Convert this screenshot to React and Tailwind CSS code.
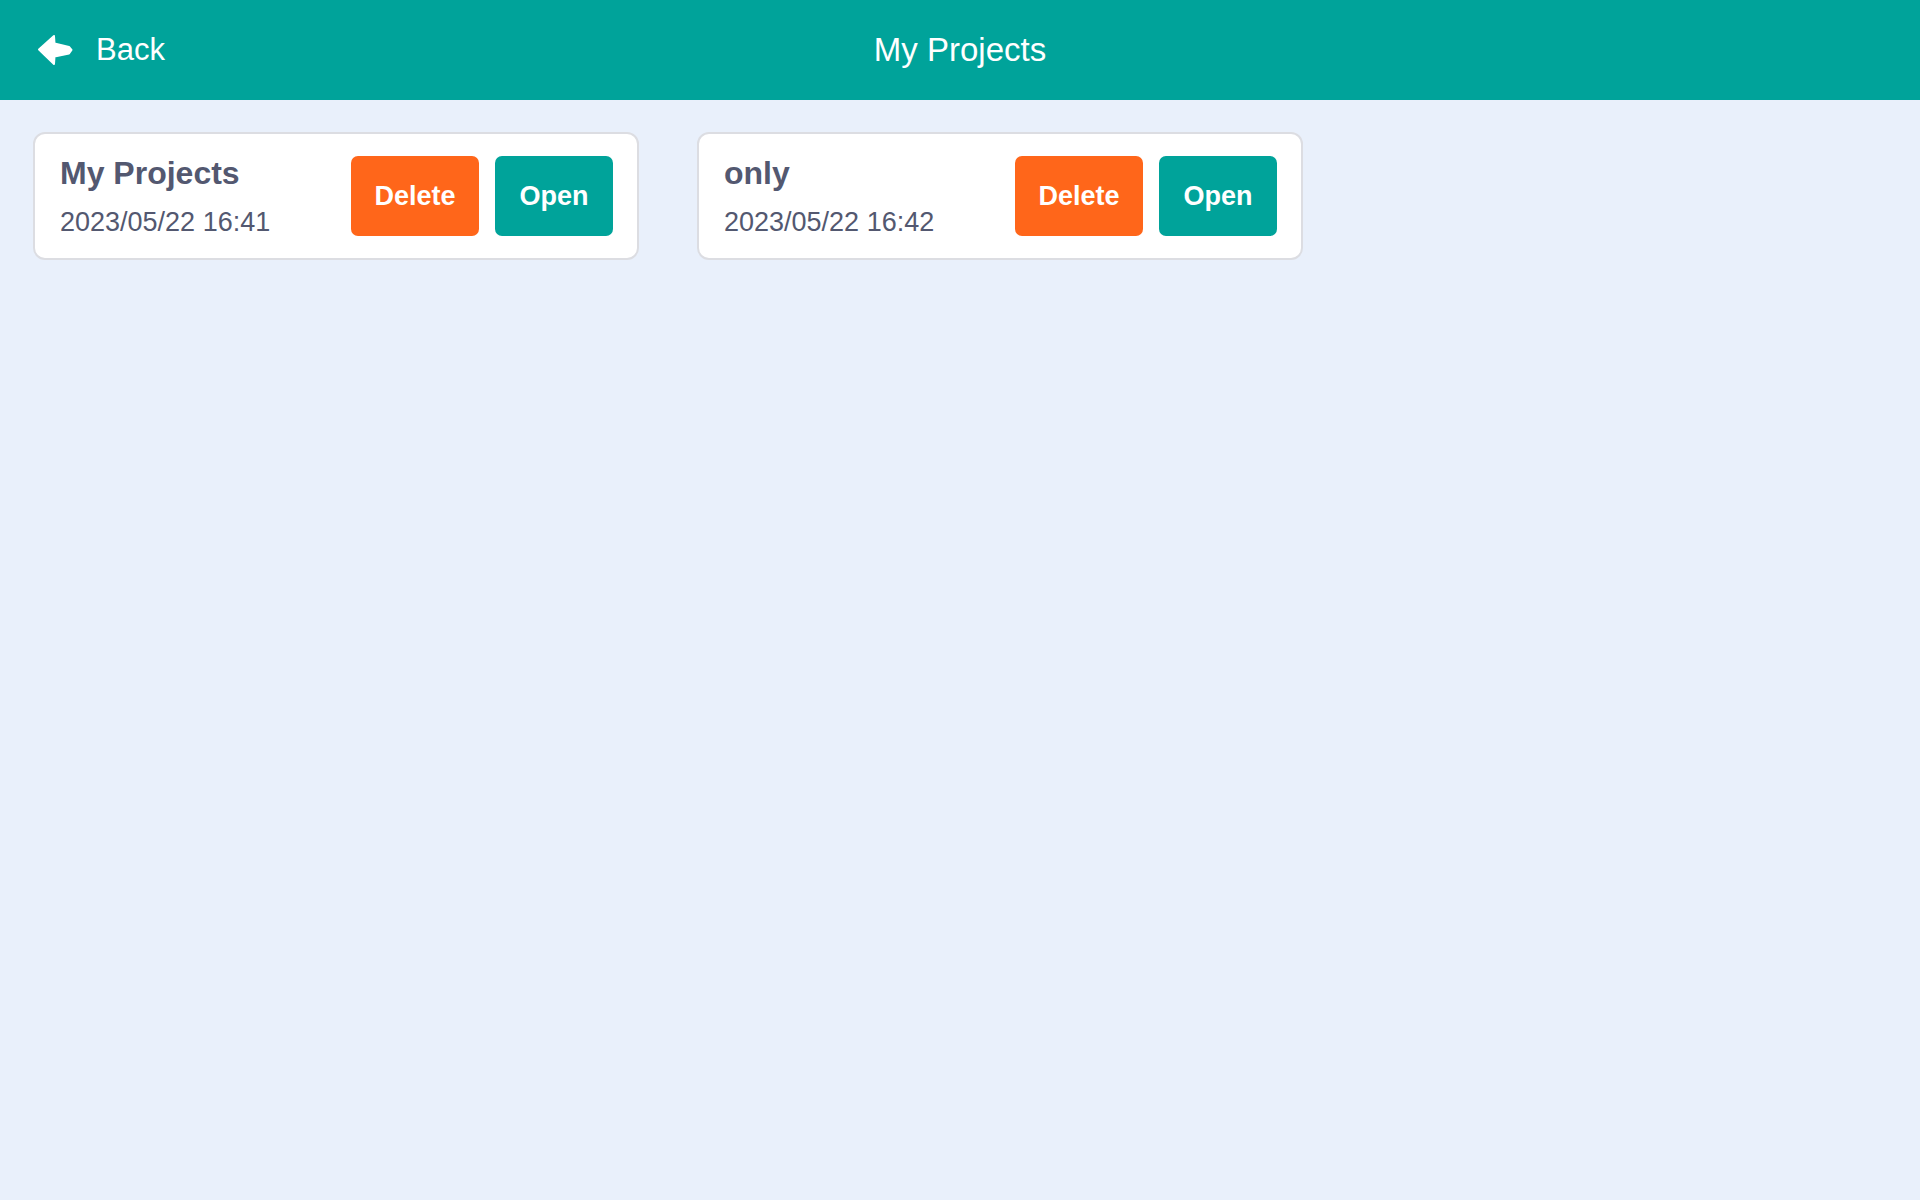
import React from "react";

const projects = [
  { name: "My Projects", date: "2023/05/22 16:41" },
  { name: "only", date: "2023/05/22 16:42" },
];

const BackArrow = () => (
  <svg width="36" height="32" viewBox="0 0 36 32" className="shrink-0">
    <polygon
      points="2,15.5 17,2 17.5,9.5 32,13 34.5,16 32,19.5 17.5,22.5 17,30"
      fill="#ffffff"
      stroke="#ffffff"
      strokeWidth="2"
      strokeLinejoin="round"
    />
  </svg>
);

const ProjectCard = ({ name, date }) => {
  return (
    <div className="w-[606px] h-[128px] bg-white border-2 border-[#dcdde2] rounded-xl pl-[25px] pr-[24px] py-[22px] flex items-center justify-between">
      <div className="flex flex-col justify-between h-full text-[#535870]">
        <div className="text-[32px] leading-[34px] font-bold">{name}</div>
        <div className="text-[27px] leading-[27px]">{date}</div>
      </div>
      <div className="flex gap-4 h-full">
        <button className="h-full w-[128px] rounded-[7px] bg-[#ff661a] text-white text-[27px] font-bold flex items-center justify-center">
          Delete
        </button>
        <button className="h-full w-[118px] rounded-[7px] bg-[#00a39a] text-white text-[27px] font-bold flex items-center justify-center">
          Open
        </button>
      </div>
    </div>
  );
};

export default function App() {
  return (
    <div
      className="min-h-[1200px] bg-[#e9f0fb]"
      style={{ fontFamily: '"Liberation Sans", Arial, sans-serif' }}
    >
      <header className="h-[100px] bg-[#00a39a] grid grid-cols-3 items-center text-white">
        <div className="flex items-center gap-[23px] pl-[37px]">
          <BackArrow />
          <span className="text-[31px]">Back</span>
        </div>
        <div className="text-center text-[33px]">My Projects</div>
        <div />
      </header>
      <main className="flex flex-wrap gap-[58px] pl-[33px] pt-[32px]">
        {projects.map((p) => (
          <ProjectCard key={p.date} name={p.name} date={p.date} />
        ))}
      </main>
    </div>
  );
}
